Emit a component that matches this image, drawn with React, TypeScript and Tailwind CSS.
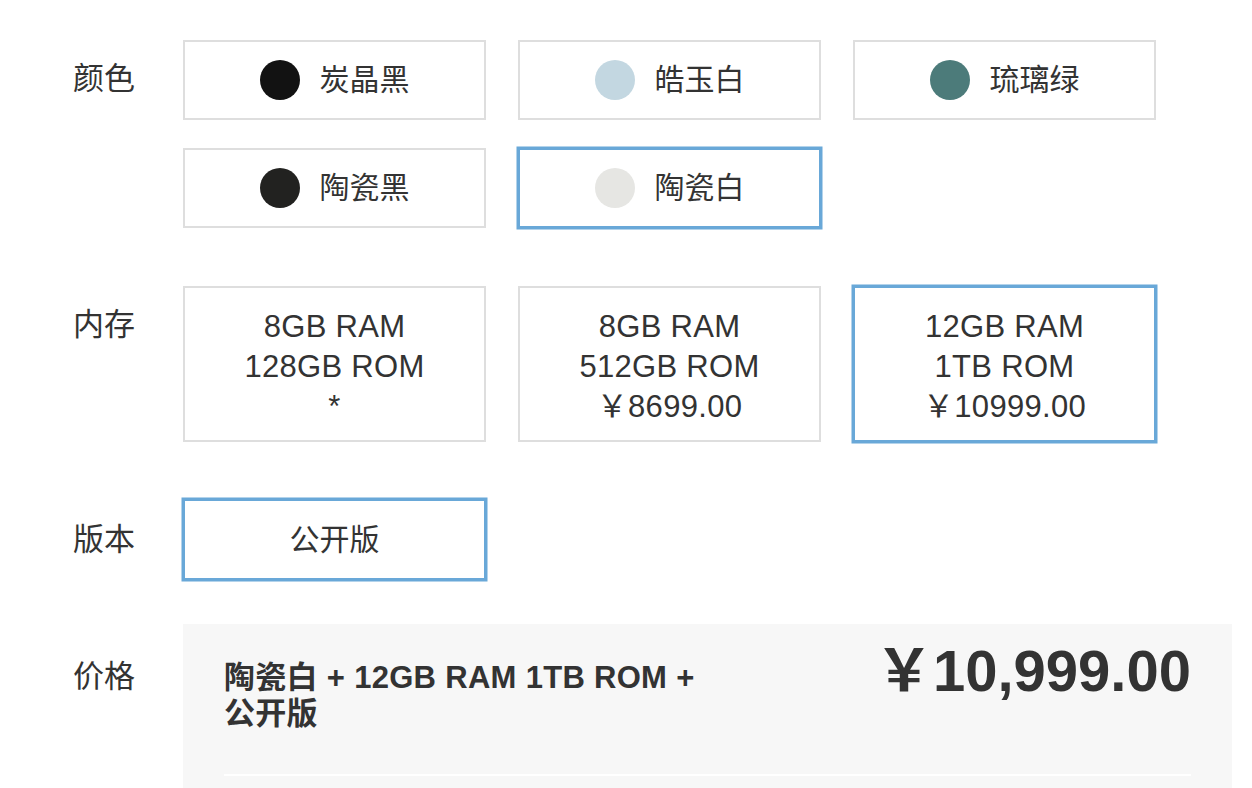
import React from "react";

const colors = [
  { name: "炭晶黑", dot: "bg-[#121212]", selected: false },
  { name: "皓玉白", dot: "bg-[#c3d7e1]", selected: false },
  { name: "琉璃绿", dot: "bg-[#4c7b7a]", selected: false },
  { name: "陶瓷黑", dot: "bg-[#222220]", selected: false },
  { name: "陶瓷白", dot: "bg-[#e6e6e3]", selected: true },
];

const memory = [
  { lines: ["8GB RAM", "128GB ROM", "*"], selected: false },
  { lines: ["8GB RAM", "512GB ROM", "￥8699.00"], selected: false },
  { lines: ["12GB RAM", "1TB ROM", "￥10999.00"], selected: true },
];

function boxClass(selected: boolean) {
  return selected
    ? "border-2 border-[#69a8d8] ring-[1.5px] ring-[#69a8d8] bg-white"
    : "border-2 border-[#dedede] bg-white";
}

function Label({ text, pt = "pt-[19px]" }: { text: string; pt?: string }) {
  return (
    <div className={`w-[110px] shrink-0 text-[31px] leading-[40px] text-[#333] ${pt}`}>
      {text}
    </div>
  );
}

export default function App() {
  return (
    <div className="min-h-[788px] w-[1252px] overflow-hidden bg-white pl-[73px] pt-[40px] font-['Liberation_Sans','Noto_Sans_CJK_SC',sans-serif] text-[#333]">
      {/* 颜色 */}
      <div className="mb-[58px] flex">
        <Label text="颜色" />
        <div className="grid grid-cols-[303px_303px_303px] gap-x-[32px] gap-y-[28px]">
          {colors.map((c) => (
            <div
              key={c.name}
              className={`flex h-[80px] items-center justify-center gap-[20px] ${boxClass(c.selected)}`}
            >
              <span className={`h-[40px] w-[40px] rounded-full ${c.dot}`} />
              <span className="text-[30px] leading-[40px]">{c.name}</span>
            </div>
          ))}
        </div>
      </div>

      {/* 内存 */}
      <div className="mb-[57px] flex">
        <Label text="内存" />
        <div className="grid grid-cols-[303px_303px_303px] gap-x-[32px]">
          {memory.map((m, i) => (
            <div
              key={i}
              className={`flex h-[156px] flex-col items-center pt-[19px] ${boxClass(m.selected)}`}
            >
              {m.lines.map((l) => (
                <div key={l} className="text-[31px] leading-[40px] tracking-[0.3px]">
                  {l}
                </div>
              ))}
            </div>
          ))}
        </div>
      </div>

      {/* 版本 */}
      <div className="mb-[44px] flex">
        <Label text="版本" pt="pt-[21px]" />
        <div
          className={`flex h-[81px] w-[303px] items-center justify-center ${boxClass(true)}`}
        >
          <span className="text-[30px] leading-[40px]">公开版</span>
        </div>
      </div>

      {/* 价格 */}
      <div className="flex">
        <Label text="价格" pt="pt-[33px]" />
        <div className="w-[1049px] bg-[#f7f7f7] px-[41px]">
          <div className="flex h-[152px] items-start justify-between border-b-2 border-white">
            <div className="w-1/2 pt-[36px] text-[31px] font-bold leading-[36px] tracking-[0.3px]">
              陶瓷白 + 12GB RAM 1TB ROM + <span className="whitespace-nowrap">公开版</span>
            </div>
            <div className="pt-[15px] text-[58px] font-bold leading-[64px]">￥10,999.00</div>
          </div>
          <div className="h-[40px]" />
        </div>
      </div>
    </div>
  );
}
